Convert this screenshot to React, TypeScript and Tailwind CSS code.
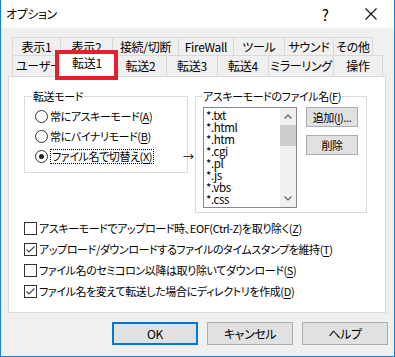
import { ReactNode } from 'react';

const Key = ({ children }: { children: ReactNode }) => (
  <span className="underline underline-offset-[2px]">{children}</span>
);

const Tab = ({ label, w }: { label: string; w: string }) => (
  <div
    className={`${w} flex items-center justify-center overflow-hidden whitespace-nowrap border-l border-t border-[#d9d9d9] bg-[#f0f0f0] last:border-r`}
  >
    {label}
  </div>
);

const Radio = ({ checked, children }: { checked?: boolean; children: ReactNode }) => (
  <div className="flex h-[20px] items-center">
    <div className="flex h-[13px] w-[13px] shrink-0 items-center justify-center rounded-full border border-[#333] bg-white">
      {checked && <div className="h-[5px] w-[5px] rounded-full bg-[#222]" />}
    </div>
    <div className="ml-[2px] whitespace-nowrap">{children}</div>
  </div>
);

const Check = ({ checked, children }: { checked?: boolean; children: ReactNode }) => (
  <div className="flex h-[21px] items-center">
    <div className="flex h-[13px] w-[13px] shrink-0 items-center justify-center border border-[#333] bg-white">
      {checked && (
        <svg width="11" height="11" viewBox="0 0 11 11">
          <polyline points="1.5,5.5 4,8 9.5,2.5" fill="none" stroke="#444" strokeWidth="1.1" />
        </svg>
      )}
    </div>
    <div className="ml-[2px] whitespace-nowrap">{children}</div>
  </div>
);

const Chevron = ({ up }: { up?: boolean }) => (
  <svg width="8" height="5" viewBox="0 0 8 5">
    <polyline
      points={up ? '0.5,4.5 4,1 7.5,4.5' : '0.5,0.5 4,4 7.5,0.5'}
      fill="none"
      stroke="#606060"
      strokeWidth="1.2"
    />
  </svg>
);

const files = ['*.txt', '*.html', '*.htm', '*.cgi', '*.pl', '*.js', '*.vbs', '*.css'];

export default function App() {
  return (
    <div className="relative flex h-[357px] w-[395px] flex-col overflow-hidden border-x border-b border-[#1a80d6] bg-[#f0f0f0] font-['Noto_Sans_CJK_JP',sans-serif] text-[11px] leading-none tracking-[-0.4px] text-black [font-feature-settings:'palt']">
      {/* title bar */}
      <div className="flex h-[28px] shrink-0 items-center bg-white pl-[5px] text-[12px]">
        <span>オプション</span>
        <div className="ml-auto flex h-full w-[46px] items-center justify-center text-[15px]">?</div>
        <div className="flex h-full w-[46px] items-center justify-center">
          <svg width="12" height="12" viewBox="0 0 12 12">
            <path d="M0.5 0.5 L11.5 11.5 M11.5 0.5 L0.5 11.5" stroke="#111" strokeWidth="1.1" />
          </svg>
        </div>
      </div>

      <div className="flex flex-col pl-[7px] pr-[6px] pt-[9px]">
        {/* tabs */}
        <div className="pl-[4px] text-[12px] tracking-[-0.3px]">
          <div className="flex h-[18px]">
            <Tab label="表示1" w="w-[48px]" />
            <Tab label="表示2" w="w-[52px]" />
            <Tab label="接続/切断" w="w-[66px]" />
            <Tab label="FireWall" w="w-[55px]" />
            <Tab label="ツール" w="w-[51px]" />
            <Tab label="サウンド" w="w-[49px]" />
            <Tab label="その他" w="w-[40px]" />
          </div>
          <div className="flex h-[21px] items-end">
            <div className="flex h-[21px] w-[48px] items-center justify-start overflow-hidden whitespace-nowrap border-l border-t border-[#d9d9d9] pl-[3px]">
              ユーザー
            </div>
            <div className="relative z-10 -mx-[2px] flex h-[25px] w-[58px] items-center justify-center border-x border-t border-[#d9d9d9] bg-white pb-[2px]">
              転送1
            </div>
            <Tab label="転送2" w="w-[52px] h-[21px]" />
            <Tab label="転送3" w="w-[51px] h-[21px]" />
            <Tab label="転送4" w="w-[51px] h-[21px]" />
            <Tab label="ミラーリング" w="w-[65px] h-[21px]" />
            <Tab label="操作" w="w-[50px] h-[21px]" />
          </div>
        </div>

        {/* panel */}
        <div className="mr-[2px] h-[237px] border border-[#d9d9d9] bg-white pl-[15px] pt-[11px]">
          <div className="relative flex items-start gap-[7px]">
            <fieldset className="h-[85px] w-[164px] border border-[#dcdcdc]">
              <legend className="ml-[7px] px-[1px] leading-[16px]">転送モード</legend>
              <div className="pl-[10px] pt-[2px]">
                <Radio>
                  常にアスキーモード(<Key>A</Key>)
                </Radio>
                <Radio>
                  常にバイナリモード(<Key>B</Key>)
                </Radio>
                <Radio checked>
                  <span className="inline-block border border-dotted border-black px-[1px] py-[1px]">
                    ファイル名で切替え(<Key>X</Key>)
                  </span>
                </Radio>
              </div>
            </fieldset>

            <div className="absolute left-[159px] top-[62px] leading-[12px]">→</div>

            <fieldset className="h-[125px] w-[172px] border border-[#dcdcdc]">
              <legend className="ml-[6px] whitespace-nowrap px-[1px] leading-[16px]">
                アスキーモードのファイル名(<Key>F</Key>)
              </legend>
              <div className="flex pl-[7px] pt-[3px]">
                <div className="flex h-[101px] w-[94px] border border-[#828790] bg-white">
                  <div className="flex-1 overflow-hidden pl-[2px] pt-[1px] text-[11.5px] leading-[12px]">
                    {files.map((f) => (
                      <div key={f} className="h-[12px]">
                        {f}
                      </div>
                    ))}
                  </div>
                  <div className="flex w-[16px] flex-col bg-[#f0f0f0]">
                    <div className="flex h-[17px] items-center justify-center">
                      <Chevron up />
                    </div>
                    <div className="h-[21px] bg-[#cdcdcd]" />
                    <div className="flex-1" />
                    <div className="flex h-[17px] items-center justify-center">
                      <Chevron />
                    </div>
                  </div>
                </div>
                <div className="ml-[9px] flex flex-col gap-[8px]">
                  <div className="flex h-[20px] w-[52px] items-center justify-center whitespace-nowrap border border-[#adadad] bg-[#e1e1e1]">
                    追加(<Key>I</Key>)...
                  </div>
                  <div className="flex h-[20px] w-[52px] items-center justify-center border border-[#adadad] bg-[#e1e1e1]">
                    削除
                  </div>
                </div>
              </div>
            </fieldset>
          </div>

          <div className="mt-[5px] flex flex-col">
            <Check>
              アスキーモードでアップロード時、EOF(Ctrl-Z)を取り除く(<Key>Z</Key>)
            </Check>
            <Check checked>
              アップロード/ダウンロードするファイルのタイムスタンプを維持(<Key>T</Key>)
            </Check>
            <Check>
              ファイル名のセミコロン以降は取り除いてダウンロード(<Key>S</Key>)
            </Check>
            <Check checked>
              ファイル名を変えて転送した場合にディレクトリを作成(<Key>D</Key>)
            </Check>
          </div>
        </div>

        {/* buttons */}
        <div className="mt-[9px] flex justify-end gap-[9px] text-[12px]">
          <div className="flex h-[23px] w-[86px] items-center justify-center border-2 border-[#0078d7] bg-[#e1e1e1]">
            OK
          </div>
          <div className="flex h-[23px] w-[86px] items-center justify-center border border-[#adadad] bg-[#e1e1e1]">
            キャンセル
          </div>
          <div className="flex h-[23px] w-[86px] items-center justify-center border border-[#adadad] bg-[#e1e1e1]">
            ヘルプ
          </div>
        </div>
      </div>

      {/* red annotation box */}
      <div className="absolute left-[54px] top-[50px] z-20 h-[30px] w-[63px] border-4 border-[#e3202b]" />
    </div>
  );
}
